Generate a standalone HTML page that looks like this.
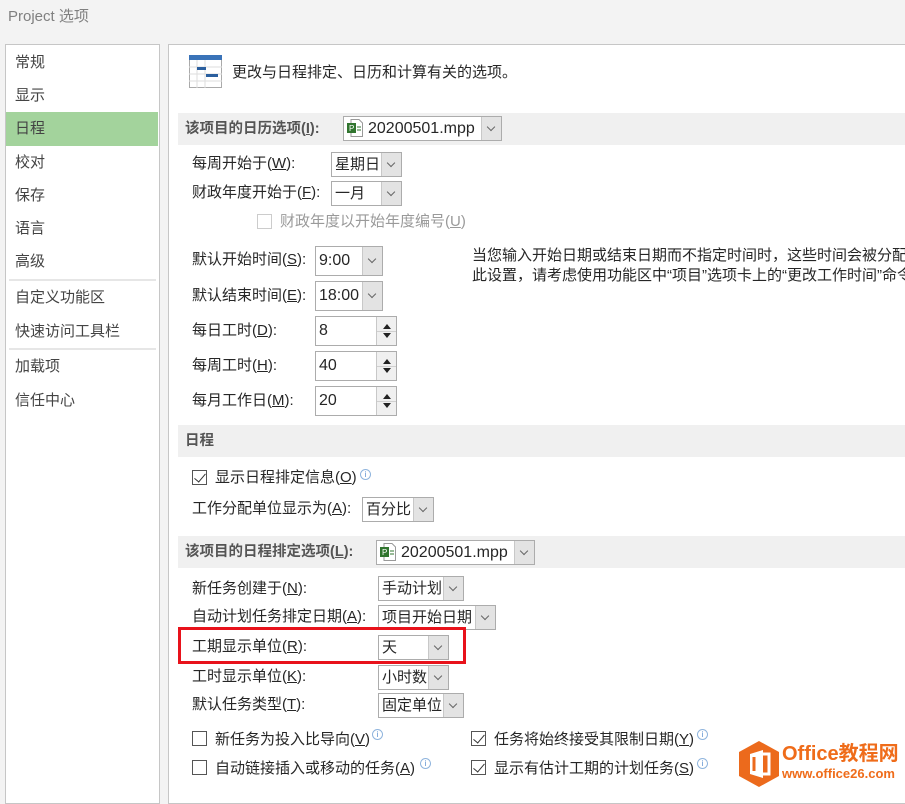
<!DOCTYPE html>
<html><head><meta charset="utf-8"><style>
*{margin:0;padding:0;box-sizing:border-box}
body{width:905px;height:789px;background:#f3f3f3;position:relative;overflow:hidden;font-family:"Liberation Sans","Noto Sans CJK SC",sans-serif;font-size:15px;color:#262626}
.a{position:absolute;white-space:nowrap;line-height:20px}
.panel{position:absolute;background:#fff;border:1px solid #c6c6c6}
.nav{left:15px}
.band{position:absolute;left:178px;width:730px;height:32px;background:#f0f0f0}
.bt{position:absolute;left:185px;line-height:32px;color:#555;font-weight:bold;font-size:14.5px}
.dd{position:absolute;background:#fff;border:1px solid #acacac}
.dd .v{position:absolute;left:3px;top:50%;transform:translateY(-50%);line-height:20px;white-space:nowrap}
.dd .ar{position:absolute;right:0;top:0;bottom:0;width:20px;background:#e3e3e3;border-left:1px solid #c8c8c8}
.dd .ar:after{content:"";position:absolute;left:6px;top:50%;margin-top:-5px;width:5px;height:5px;border-right:1px solid #666;border-bottom:1px solid #666;transform:rotate(45deg)}
.sp .ar{background:#f0f0f0}
.sp .ar:after{display:none}
.up,.dn{position:absolute;left:6px;width:0;height:0;border-left:4px solid transparent;border-right:4px solid transparent}
.up{top:7px;border-bottom:5px solid #222}
.dn{bottom:7px;border-top:5px solid #222}
.sp .mid{position:absolute;left:0;right:0;top:50%;border-top:1px solid #d0d0d0}
.cb{position:absolute;width:15px;height:15px;border:1px solid #555;background:#fff}
.cb.k:after{content:"";position:absolute;left:4px;top:0px;width:5px;height:10px;border-right:1.5px solid #333;border-bottom:1.5px solid #333;transform:rotate(40deg)}
.info{position:absolute;width:11px;height:11px;border:1px solid #8fb4dd;border-radius:50%;font-size:8px;line-height:9px;text-align:center;color:#5a8fd0}
u{text-decoration:underline}
</style></head><body>
<div class="a" style="left:8px;top:7px;color:#808080">Project 选项</div>

<div class="panel" style="left:5px;top:44px;width:155px;height:760px"></div>
<div style="position:absolute;left:6px;top:112px;width:152px;height:34px;background:#a3d39c"></div>
<div style="position:absolute;left:9px;top:279px;width:147px;height:2px;background:#e6e6e6"></div>
<div style="position:absolute;left:9px;top:348px;width:147px;height:2px;background:#e6e6e6"></div>
<div class="a nav" style="top:53px;color:#444">常规</div>
<div class="a nav" style="top:86px;color:#444">显示</div>
<div class="a nav" style="top:119px;color:#444">日程</div>
<div class="a nav" style="top:153px;color:#444">校对</div>
<div class="a nav" style="top:186px;color:#444">保存</div>
<div class="a nav" style="top:219px;color:#444">语言</div>
<div class="a nav" style="top:252px;color:#444">高级</div>
<div class="a nav" style="top:288px;color:#444">自定义功能区</div>
<div class="a nav" style="top:322px;color:#444">快速访问工具栏</div>
<div class="a nav" style="top:357px;color:#444">加载项</div>
<div class="a nav" style="top:391px;color:#444">信任中心</div>

<div class="panel" style="left:168px;top:44px;width:760px;height:760px"></div>
<svg style="position:absolute;left:189px;top:55px" width="33" height="33" viewBox="0 0 33 33">
<rect x="0.5" y="0.5" width="32" height="32" fill="#fff" stroke="#aaa"/>
<rect x="0" y="0" width="33" height="5" fill="#3a73b8"/>
<path d="M0 12H33M0 19H33M0 26H33M8 5V33M16 5V33" stroke="#ddd"/>
<rect x="8" y="12" width="9" height="3" fill="#2b5f9e"/>
<rect x="17" y="19" width="12" height="3" fill="#2b5f9e"/>
</svg>
<div class="a" style="left:232px;top:63px">更改与日程排定、日历和计算有关的选项。</div>

<div class="band" style="top:113px"></div>
<div class="bt" style="top:113px">该项目的日历选项(<u>I</u>):</div>
<div class="dd" style="left:343px;top:116px;width:159px;height:25px"><span class="v" style="left:24px;font-size:16px">20200501.mpp</span><div class="ar"></div></div>
<svg style="position:absolute;left:347px;top:119px" width="16" height="18"><path d="M4 0.5H12L15.5 4V17.5H4Z" fill="#fff" stroke="#999"/><rect x="0" y="4" width="9" height="10" fill="#31752f"/><text x="2" y="12" font-size="8" fill="#fff" font-family="Liberation Sans">P</text><path d="M10 8H14M10 11H14" stroke="#31752f"/></svg>

<div class="a" style="left:192px;top:154px">每周开始于(<u>W</u>):</div>
<div class="dd" style="left:331px;top:152px;width:71px;height:25px"><span class="v">星期日</span><div class="ar"></div></div>
<div class="a" style="left:192px;top:183px">财政年度开始于(<u>F</u>):</div>
<div class="dd" style="left:331px;top:181px;width:71px;height:25px"><span class="v">一月</span><div class="ar"></div></div>
<div class="cb" style="left:257px;top:214px;border-color:#ccc"></div>
<div class="a" style="left:280px;top:212px;color:#9a9a9a">财政年度以开始年度编号(<u>U</u>)</div>

<div class="a" style="left:192px;top:250px">默认开始时间(<u>S</u>):</div>
<div class="dd" style="left:315px;top:246px;width:68px;height:30px"><span class="v" style="font-size:16px">9:00</span><div class="ar"></div></div>
<div class="a" style="left:192px;top:286px">默认结束时间(<u>E</u>):</div>
<div class="dd" style="left:315px;top:281px;width:68px;height:30px"><span class="v" style="font-size:16px">18:00</span><div class="ar"></div></div>
<div class="a" style="left:192px;top:321px">每日工时(<u>D</u>):</div>
<div class="dd sp" style="left:315px;top:316px;width:82px;height:30px"><span class="v" style="font-size:16px">8</span><div class="ar"><div class="mid"></div><div class="up"></div><div class="dn"></div></div></div>
<div class="a" style="left:192px;top:356px">每周工时(<u>H</u>):</div>
<div class="dd sp" style="left:315px;top:351px;width:82px;height:30px"><span class="v" style="font-size:16px">40</span><div class="ar"><div class="mid"></div><div class="up"></div><div class="dn"></div></div></div>
<div class="a" style="left:192px;top:391px">每月工作日(<u>M</u>):</div>
<div class="dd sp" style="left:315px;top:386px;width:82px;height:30px"><span class="v" style="font-size:16px">20</span><div class="ar"><div class="mid"></div><div class="up"></div><div class="dn"></div></div></div>
<div class="a" style="left:472px;top:246px">当您输入开始日期或结束日期而不指定时间时，这些时间会被分配</div>
<div class="a" style="left:472px;top:266px">此设置，请考虑使用功能区中“项目”选项卡上的“更改工作时间”命令</div>

<div class="band" style="top:425px"></div>
<div class="bt" style="top:425px">日程</div>
<div class="cb k" style="left:192px;top:470px"></div>
<div class="a" style="left:215px;top:468px">显示日程排定信息(<u>O</u>)</div>
<div class="info" style="left:360px;top:469px">i</div>
<div class="a" style="left:192px;top:499px">工作分配单位显示为(<u>A</u>):</div>
<div class="dd" style="left:362px;top:497px;width:72px;height:25px"><span class="v">百分比</span><div class="ar"></div></div>

<div class="band" style="top:536px"></div>
<div class="bt" style="top:536px">该项目的日程排定选项(<u>L</u>):</div>
<div class="dd" style="left:376px;top:540px;width:159px;height:25px"><span class="v" style="left:24px;font-size:16px">20200501.mpp</span><div class="ar"></div></div>
<svg style="position:absolute;left:380px;top:543px" width="16" height="18"><path d="M4 0.5H12L15.5 4V17.5H4Z" fill="#fff" stroke="#999"/><rect x="0" y="4" width="9" height="10" fill="#31752f"/><text x="2" y="12" font-size="8" fill="#fff" font-family="Liberation Sans">P</text><path d="M10 8H14M10 11H14" stroke="#31752f"/></svg>

<div class="a" style="left:192px;top:579px">新任务创建于(<u>N</u>):</div>
<div class="dd" style="left:378px;top:576px;width:86px;height:25px"><span class="v">手动计划</span><div class="ar"></div></div>
<div class="a" style="left:192px;top:607px">自动计划任务排定日期(<u>A</u>):</div>
<div class="dd" style="left:378px;top:605px;width:118px;height:25px"><span class="v">项目开始日期</span><div class="ar"></div></div>
<div class="a" style="left:192px;top:637px">工期显示单位(<u>R</u>):</div>
<div class="dd" style="left:378px;top:635px;width:71px;height:25px"><span class="v">天</span><div class="ar"></div></div>
<div style="position:absolute;left:178px;top:627px;width:288px;height:37px;border:3px solid #e8121b"></div>
<div class="a" style="left:192px;top:667px">工时显示单位(<u>K</u>):</div>
<div class="dd" style="left:378px;top:665px;width:71px;height:25px"><span class="v">小时数</span><div class="ar"></div></div>
<div class="a" style="left:192px;top:695px">默认任务类型(<u>T</u>):</div>
<div class="dd" style="left:378px;top:693px;width:86px;height:25px"><span class="v">固定单位</span><div class="ar"></div></div>

<div class="cb" style="left:192px;top:731px"></div>
<div class="a" style="left:215px;top:730px">新任务为投入比导向(<u>V</u>)</div>
<div class="info" style="left:372px;top:729px">i</div>
<div class="cb k" style="left:471px;top:731px"></div>
<div class="a" style="left:494px;top:730px">任务将始终接受其限制日期(<u>Y</u>)</div>
<div class="info" style="left:697px;top:729px">i</div>
<div class="cb" style="left:192px;top:760px"></div>
<div class="a" style="left:215px;top:759px">自动链接插入或移动的任务(<u>A</u>)</div>
<div class="info" style="left:420px;top:758px">i</div>
<div class="cb k" style="left:471px;top:760px"></div>
<div class="a" style="left:494px;top:759px">显示有估计工期的计划任务(<u>S</u>)</div>
<div class="info" style="left:697px;top:758px">i</div>

<svg style="position:absolute;left:738px;top:740px" width="42" height="48" viewBox="0 0 42 48">
<path d="M21 1L41 12V36L21 47L1 36V12Z" fill="#ec6a1c"/>
<path d="M12 14L25 10V38L12 34Z" fill="#fff"/>
<path d="M25 14H31V34H25" fill="none" stroke="#fff" stroke-width="3"/>
<path d="M16 17V31" stroke="#ec6a1c" stroke-width="3"/>
</svg>
<div class="a" style="left:782px;top:742px;color:#ef6c1a;font-weight:bold;font-size:20px;line-height:24px">Office教程网</div>
<div class="a" style="left:782px;top:765px;color:#ef6c1a;font-weight:bold;font-size:13px;line-height:18px">www.office26.com</div>
</body></html>
